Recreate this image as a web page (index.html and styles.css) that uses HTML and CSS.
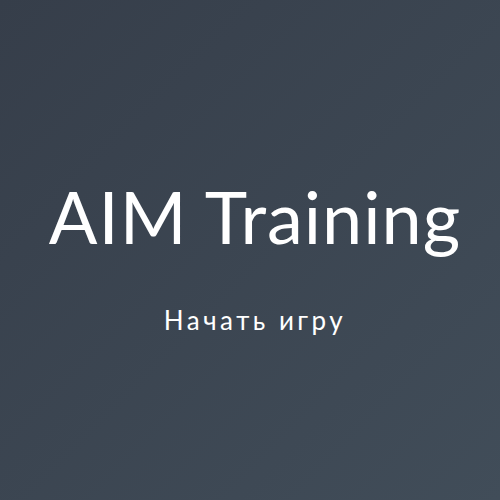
FILE: index.html
```html
<!DOCTYPE html>
<html lang="ru">
<head>
<meta charset="utf-8">
<link rel="stylesheet" href="styles.css">
</head>
<body>
<div class="screen">
  <h1 class="title">AIM Training</h1>
  <a href="#" class="start">Начать игру</a>
</div>
</body>
</html>
```
FILE: styles.css
```css
html, body {
  margin: 0;
  height: 100%;
}
body {
  background: linear-gradient(135deg, #363e4a 0%, #414d59 100%);
  font-family: "Lato", "Open Sans", sans-serif;
  color: #fff;
}
.screen {
  height: 100%;
  display: flex;
  flex-direction: column;
  align-items: center;
  justify-content: center;
  padding-top: 13px;
  padding-left: 10px;
  box-sizing: border-box;
}
.title {
  margin: 0;
  font-size: 72px;
  font-weight: 400;
  line-height: 1;
  letter-spacing: 1px;
}
.start {
  margin-top: 55px;
  color: #fff;
  text-decoration: none;
  font-size: 26px;
  line-height: 1;
  letter-spacing: 3.5px;
}
```
